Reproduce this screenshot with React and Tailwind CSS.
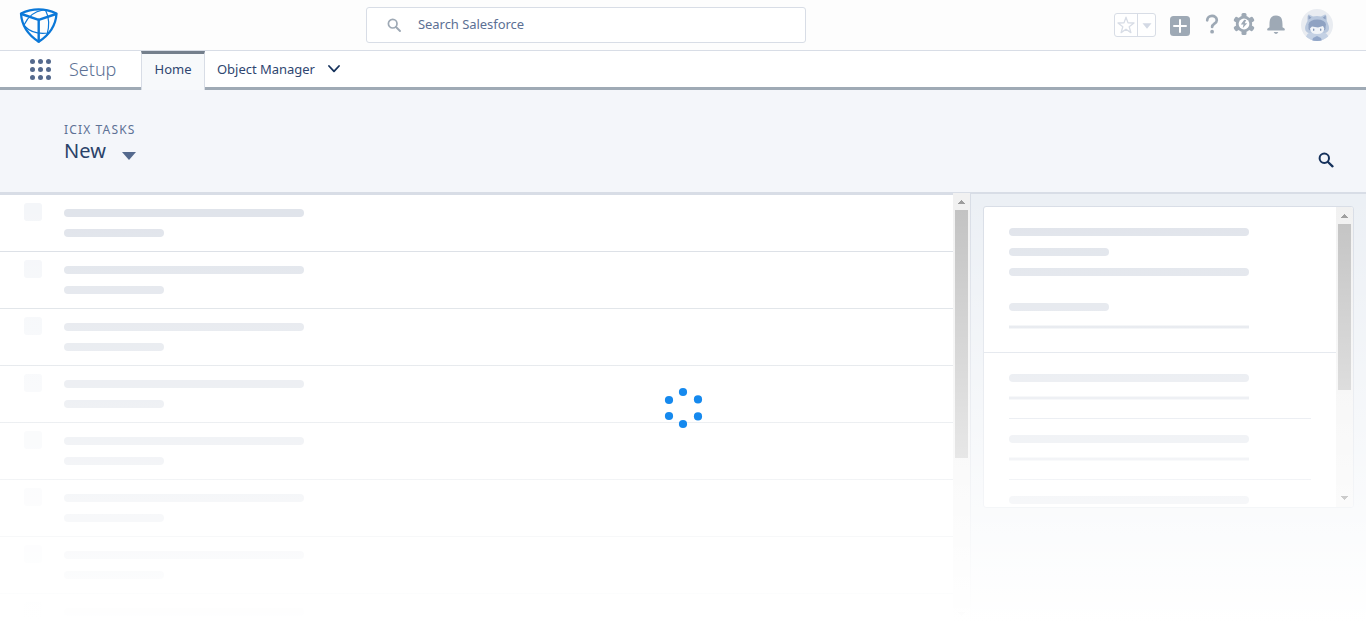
import React from 'react';

const LINK = "whitespace-nowrap text-[13px] leading-5 tracking-[-0.03px] text-[#2f4670]";

function Logo() {
  return (
    <svg className="ml-[19px] mt-[7px] h-[38px] w-[40px] shrink-0" viewBox="0 0 40 38" fill="none" stroke="#0b78d8" strokeLinejoin="round" strokeLinecap="round">
      <path d="M2 6.500Q19.500 -1.600 37.500 6.500Q36.500 24 19.700 34.700Q3 24 2 6.500Z" strokeWidth="2.300" />
      <path d="M2.500 7L19.700 12.800L37 7M19.700 12.800V34.500" strokeWidth="2.400" />
      <path d="M5 18Q11 5 24 3M26.500 3Q32 14 28 28M5.500 19Q14 28 29 26" strokeWidth="1.200" />
    </svg>
  );
}

function TopBar() {
  return (
    <header className="flex h-[51px] shrink-0 border-b border-[#d8dde6] bg-[#fdfdfd]">
      <Logo />
      <div className="ml-[307px] mt-[7px] flex h-9 w-[440px] shrink-0 items-center rounded-[3px] border border-[#d8dde6] bg-white pl-5">
        <svg className="h-[14px] w-[14px]" viewBox="0 0 14 14" fill="none" stroke="#9ea9b5">
          <circle cx="5.700" cy="5.700" r="4.300" strokeWidth="1.700" />
          <path d="M9 9l4 4" strokeWidth="1.900" strokeLinecap="round" />
        </svg>
        <span className="-mt-[3px] ml-[17px] whitespace-nowrap text-[13px] leading-5 tracking-[-0.05px] text-[#5c7094]">Search Salesforce</span>
      </div>
      <div className="ml-[308px] mt-[13px] flex h-6 w-[42px] shrink-0 rounded-[3px] border border-[#d8dde6] bg-white">
        <div className="flex w-[23px] items-center justify-center border-r border-[#d8dde6]">
          <svg className="h-[18px] w-[18px]" viewBox="0 0 18 18" fill="none" stroke="#d8dde6" strokeWidth="1.300" strokeLinejoin="round">
            <path d="M9 1.200L11 6.900L17 7L12.200 10.700L13.900 16.600L9 13.200L4.100 16.600L5.800 10.700L1 7L7 6.900Z" />
          </svg>
        </div>
        <svg className="ml-[4px] mt-[9px] h-[6px] w-[10px]" viewBox="0 0 10 6"><path d="M0.500 0.300H9.500L5 5.700Z" fill="#d3d9e4" /></svg>
      </div>
      <svg className="ml-[14px] mt-4 h-5 w-5 shrink-0" viewBox="0 0 20 20">
        <rect width="20" height="20" rx="3.500" fill="#9ea9b5" />
        <path d="M10 4v12M4 10h12" stroke="#fff" strokeWidth="2" strokeLinecap="round" />
      </svg>
      <svg className="ml-[15px] mt-[14px] h-5 w-[14px] shrink-0" viewBox="0 0 14 20" fill="none" stroke="#9ea9b5" strokeWidth="2.700" strokeLinecap="round">
        <path d="M2.200 6.300C2.200 0.600 11.800 0.400 11.800 6.200C11.800 9.800 7.100 9.500 7.100 13" />
        <circle cx="7.100" cy="17.700" r="1.900" fill="#9ea9b5" stroke="none" />
      </svg>
      <svg className="ml-[14px] mt-[13px] h-[22px] w-[22px] shrink-0" viewBox="0 0 22 22">
        <g fill="#9ea9b5">
          <circle cx="11" cy="11" r="8.200" />
          <rect x="8.500" y="0" width="5" height="22" rx="1.500" />
          <rect x="8.500" y="0" width="5" height="22" rx="1.500" transform="rotate(60 11 11)" />
          <rect x="8.500" y="0" width="5" height="22" rx="1.500" transform="rotate(120 11 11)" />
        </g>
        <circle cx="11" cy="11" r="5.400" fill="#fff" />
        <path d="M11.200 6.800L7.800 11.500H10.500L9.700 15.300L14.200 10.200H11.700L13.200 7Z" fill="#9ea9b5" />
      </svg>
      <svg className="ml-[12px] mt-[15px] h-[20px] w-[18px] shrink-0" viewBox="0.500 0 18 20" fill="#9ea9b5">
        <path d="M3 12.200C2.800 5 3.500 0.500 9.500 0.500S16.200 5 16 12.200L18 13.500Q18.900 15.300 17.600 15.400H1.400Q0.100 15.300 1 13.500Z" />
        <path d="M7.100 17h4.800Q9.500 21 7.100 17Z" />
      </svg>
      <svg className="ml-[16px] mt-[9px] h-8 w-8 shrink-0" viewBox="0 0 32 32">
        <defs><clipPath id="avatar"><circle cx="16" cy="16" r="16" /></clipPath></defs>
        <g clipPath="url(#avatar)">
          <rect width="32" height="32" fill="#e9ecf1" />
          <path d="M4 32Q5 23 11 23H21Q27 23 29 32Z" fill="#c4d1e4" />
          <path d="M6.500 12Q6 5 8 5.500L12 7.500Q16 6.500 20 7.500L24 5.500Q26 5 25.800 12Q31 22 24 24H8Q1 22 6.500 12Z" fill="#b9c8de" />
          <path d="M7.500 6.500L10.500 8.700L7.500 10.500ZM24.700 6.500L21.700 8.700L24.700 10.500Z" fill="#8ea1c1" />
          <ellipse cx="16.200" cy="15.500" rx="8.700" ry="5" fill="#8fa2c2" />
          <rect x="7.500" y="15" width="17" height="6.500" rx="2" fill="#8fa2c2" />
          <path d="M9 19.500Q10 18.500 11 17.500L17 18.500L22 17L23.300 19.500Q23 25 16 25Q9.500 25 9 19.500Z" fill="#f1f4f8" />
          <ellipse cx="12.700" cy="20.800" rx="0.700" ry="1.200" fill="#8194b5" />
          <ellipse cx="19.700" cy="20.800" rx="0.700" ry="1.200" fill="#8194b5" />
          <path d="M12 29L16 27L20 29L21 32H11Z" fill="#91a6c8" />
        </g>
      </svg>
    </header>
  );
}

function NavBar() {
  return (
    <nav className="flex h-[39px] shrink-0 bg-white">
      <div className="flex w-[141px] border-b-[3px] border-[#9faab5]">
        <svg className="ml-[30px] mt-2 h-[21px] w-[21px]" viewBox="0 0 21 21" fill="#54698d">
          {[2.5, 10.5, 18.5].map((y) => [2.5, 10.5, 18.5].map((x) => <circle key={x + '-' + y} cx={x} cy={y} r="2.500" />))}
        </svg>
        <span className="ml-[18px] mt-1 whitespace-nowrap text-[18px] font-light leading-7 text-[#5d7195]">Setup</span>
      </div>
      <div className="flex w-[64px] justify-center border-x border-t-[3px] border-x-[#d8dde6] border-t-[#747f8c] bg-[#f7f9fb] pt-[5px]">
        <span className={LINK}>Home</span>
      </div>
      <div className="flex flex-1 border-b-[3px] border-[#9faab5] pl-3 pt-2">
        <span className={LINK + ' w-[97px]'}>Object Manager</span>
        <svg className="ml-[14px] mt-[6px] h-[8px] w-[12px]" viewBox="0 0 12 8" fill="none" stroke="#16325c" strokeWidth="1.800" strokeLinecap="round" strokeLinejoin="round"><path d="M1 1L6 6.300L11 1" /></svg>
      </div>
    </nav>
  );
}

function PageHeader() {
  return (
    <section className="flex h-[102px] shrink-0 justify-between bg-[#f4f6fa] pl-16 pr-8">
      <div className="pt-8">
        <p className="whitespace-nowrap text-[12px] leading-4 tracking-[1.150px] text-[#5d7195]">ICIX TASKS</p>
        <div className="-mt-px flex">
          <h1 className="w-[58px] whitespace-nowrap text-[20px] leading-7 tracking-[0.1px] text-[#2a4269]">New</h1>
          <svg className="mt-[15px] h-[8px] w-[14px]" viewBox="0 0 14 8"><path d="M0 0H14L7 8Z" fill="#54698d" /></svg>
        </div>
      </div>
      <svg className="mt-[62px] h-4 w-4" viewBox="0 0 16 16" fill="none" stroke="#16325c">
        <circle cx="6.300" cy="6.300" r="4.700" strokeWidth="2" />
        <path d="M10 10l4.500 4.300" strokeWidth="2.300" strokeLinecap="round" />
      </svg>
    </section>
  );
}

function Arrow({ down }) {
  return (
    <svg className="h-[4px] w-[7px] shrink-0" viewBox="0 0 7 4" shapeRendering="crispEdges" fill="#9b9b9b">
      <path d={down ? 'M0 0H7V1H6V2H5V3H4V4H3V3H2V2H1V1H0Z' : 'M0 4H7V3H6V2H5V1H4V0H3V1H2V2H1V3H0Z'} />
    </svg>
  );
}

function TaskRow() {
  return (
    <div className="flex h-[57px] shrink-0 border-b border-[#d8dde3] bg-white pl-6">
      <div className="mt-2 h-[18px] w-[18px] rounded-[3px] bg-[#f4f6f9]" />
      <div className="ml-[22px] pt-[14px]">
        <div className="h-2 w-[240px] rounded-full bg-[#dfe3ea]" />
        <div className="mt-3 h-2 w-[100px] rounded-full bg-[#dfe3ea]" />
      </div>
    </div>
  );
}

const BAR = "h-2 w-[240px] shrink-0 rounded-full bg-[#dfe3ea]";
const SHORT = "h-2 w-[100px] shrink-0 rounded-full bg-[#dfe3ea]";
const THIN = "mt-[14px] h-[4px] w-[240px] shrink-0 border-y border-[#f0f2f5] bg-[#dfe3ea]";

function DetailCard() {
  return (
    <div className="ml-3 mt-3 flex h-[302px] w-[371px] overflow-hidden rounded-[3px] border border-[#d8dde6] bg-white">
      <div className="flex flex-1 flex-col">
        <div className="flex h-[146px] shrink-0 flex-col border-b border-[#d8dde6] pl-[25px] pt-[21px]">
          <div className={BAR} />
          <div className={SHORT + ' mt-3'} />
          <div className={BAR + ' mt-3'} />
          <div className={SHORT + ' mt-[27px]'} />
          <div className={THIN} />
        </div>
        <div className="ml-[25px] mr-[25px] h-[66px] shrink-0 border-b border-[#d8dde6] pt-[21px]">
          <div className={BAR} />
          <div className={THIN} />
        </div>
        <div className="ml-[25px] mr-[25px] h-[61px] shrink-0 border-b border-[#d8dde6] pt-4">
          <div className={BAR} />
          <div className={THIN} />
        </div>
        <div className="pl-[25px] pt-4"><div className={BAR} /></div>
      </div>
      <div className="flex w-[17px] flex-col items-center bg-[#f1f1f1] pb-[7px] pt-[7px]">
        <Arrow />
        <div className="mt-[6px] h-[166px] w-[13px] bg-[#c1c1c1]" />
        <div className="flex-1" />
        <svg className="h-[4px] w-[7px] shrink-0" viewBox="0 0 7 4" shapeRendering="crispEdges" fill="#505050">
          <path d="M0 0H7V1H6V2H5V3H4V4H3V3H2V2H1V1H0Z" />
        </svg>
      </div>
    </div>
  );
}

const DOTS = [[19, 5], [34, 12.4], [34, 29.4], [19, 37], [5, 29], [5, 13]];

export default function App() {
  return (
    <div className="flex h-[623px] w-[1366px] flex-col overflow-hidden bg-white font-['Noto_Sans',sans-serif]">
      <TopBar />
      <NavBar />
      <PageHeader />
      <main className="relative flex min-h-0 flex-1">
        <div className="flex w-[953px] flex-col overflow-hidden border-t-[3px] border-[#d8dde6]">
          {Array.from({ length: 8 }, (_, i) => <TaskRow key={i} />)}
        </div>
        <div className="flex w-[17px] flex-col items-center border-t border-t-[#d8dde6] bg-[#f1f1f1] pb-[7px] pt-[7px]">
          <Arrow />
          <div className="mt-[6px] h-[248px] w-[13px] bg-[#c1c1c1]" />
          <div className="flex-1" />
          <Arrow down />
        </div>
        <div className="flex-1 border-l border-t-2 border-[#d8dde6] bg-[#ecf0f5]">
          <DetailCard />
        </div>
        <div className="absolute inset-x-0 bottom-0 top-[3px] bg-linear-to-b from-white/0 to-white" />
        <svg className="absolute left-[664px] top-[195px] h-[42px] w-[40px]" viewBox="0 0 40 42" fill="#1589ee">
          {DOTS.map(([x, y]) => <circle key={x + '-' + y} cx={x} cy={y} r="4.100" />)}
        </svg>
      </main>
    </div>
  );
}
